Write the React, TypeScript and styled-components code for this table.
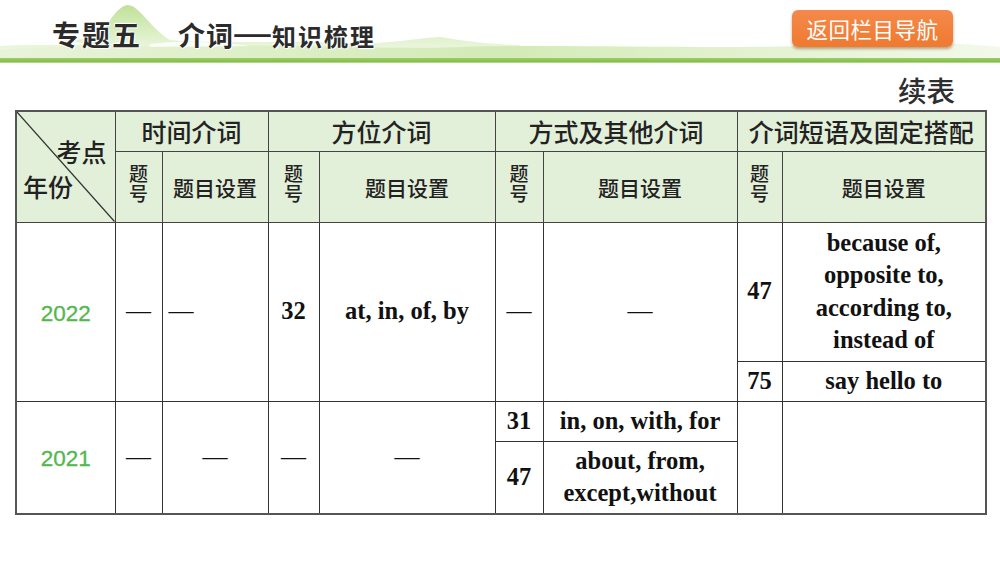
import React from 'react';
import styled, { createGlobalStyle } from 'styled-components';

const Global = createGlobalStyle`
  html, body { margin: 0; padding: 0; background: #fff; }
  body {
    width: 1000px; height: 563px; overflow: hidden;
    font-family: "Noto Sans CJK SC", "Noto Sans", sans-serif;
  }
`;

const Page = styled.div`
  width: 1000px;
  height: 563px;
  display: flex;
  flex-direction: column;
`;

const Header = styled.header`
  position: relative;
  height: 58px;
  display: flex;
  justify-content: space-between;
  align-items: stretch;
  padding: 0 47px 0 52px;
  box-sizing: border-box;
`;

const Hills = styled.svg`
  position: absolute;
  left: 0;
  top: 0;
  width: 1000px;
  height: 58px;
  z-index: 0;
`;

const Title = styled.h1`
  position: relative;
  z-index: 1;
  margin: 0;
  display: flex;
  align-items: flex-end;
  padding-bottom: 10px;
  font-weight: 700;
  color: #2b2b2b;
  text-shadow: 0 0 2px #fff, 1px 1px 1px #fff, -1px -1px 1px #fff;
`;

const TitlePart = styled.span<{ $size: number; $gap?: number; $ls?: number }>`
  font-size: ${(p) => p.$size}px;
  line-height: 1;
  margin-right: ${(p) => p.$gap ?? 0}px;
  letter-spacing: ${(p) => p.$ls ?? 2}px;
`;

const TitleDash = styled.span`
  display: inline-block;
  font-family: "Liberation Sans", Arial, sans-serif;
  font-size: 27px;
  line-height: 1;
  margin: 0 6px 0 5px;
  transform: scaleX(1.35);
  transform-origin: center;
`;

const NavButton = styled.button`
  position: relative;
  z-index: 1;
  align-self: flex-start;
  margin-top: 10px;
  width: 161px;
  height: 37px;
  border: none;
  border-radius: 6px;
  background: linear-gradient(#f5894a, #ef7a30);
  box-shadow: 0 2px 3px rgba(120, 60, 20, 0.45);
  color: #fff;
  font-family: "Noto Sans CJK SC", sans-serif;
  font-size: 21.5px;
  letter-spacing: 0.5px;
  padding: 0;
`;

const GreenBar = styled.div`
  height: 5px;
  background: linear-gradient(#9ccd66, #86bf4c 70%, #c6e3a6);
`;

const Continued = styled.div`
  height: 47px;
  display: flex;
  justify-content: flex-end;
  align-items: center;
  padding-right: 45px;
  padding-top: 6px;
  box-sizing: border-box;
  font-size: 28.5px;
  font-weight: 500;
  color: #2e2e2e;
`;

const Table = styled.table`
  margin-left: 15px;
  width: 970px;
  border-collapse: collapse;
  table-layout: fixed;
  border: 2px solid #555;
`;

const HeadRow = styled.tr<{ $h: number }>`
  height: ${(p) => p.$h}px;
  background: #e2efd9;
`;

const BodyRow = styled.tr<{ $h: number }>`
  height: ${(p) => p.$h}px;
`;

const GroupHead = styled.th`
  border: 1.5px solid #444;
  padding: 0;
  font-size: 25px;
  font-weight: 500;
  color: #222;
  text-align: center;
  vertical-align: middle;
  white-space: nowrap;
`;

const SubHead = styled.th`
  border: 1.5px solid #444;
  padding: 0;
  font-size: 21px;
  font-weight: 500;
  color: #222;
  text-align: center;
  vertical-align: middle;
`;

const Stack = styled.span`
  display: inline-block;
  writing-mode: vertical-lr;
  text-orientation: upright;
  font-size: 19px;
  line-height: 1;
  letter-spacing: 1px;
`;

const DiagCell = styled.th`
  position: relative;
  border: 1.5px solid #444;
  padding: 0;
  font-weight: 500;
  color: #222;
  font-size: 25px;
  vertical-align: top;
`;

const DiagLine = styled.svg`
  position: absolute;
  left: 0;
  top: 0;
  width: 100%;
  height: 100%;
`;

const DiagInner = styled.div`
  position: relative;
  height: 108px;
  display: flex;
  flex-direction: column;
  justify-content: space-between;
  padding: 27px 8px 21px 6px;
  box-sizing: border-box;
  line-height: 1;
`;

const DiagTop = styled.span`
  align-self: flex-end;
`;

const DiagBottom = styled.span`
  align-self: flex-start;
`;

const Cell = styled.td<{ $align?: string }>`
  border: 1.5px solid #333;
  padding: 0;
  padding-left: ${(p) => (p.$align === 'left' ? '6px' : '0')};
  text-align: ${(p) => p.$align ?? 'center'};
  vertical-align: middle;
  font-family: "Liberation Serif", "Times New Roman", serif;
  font-weight: 700;
  font-size: 24.5px;
  line-height: 32.5px;
  color: #111;
`;

const Year = styled.td`
  border: 1.5px solid #333;
  padding: 4px 0 0;
  text-align: center;
  vertical-align: middle;
  font-family: "Liberation Sans", Arial, sans-serif;
  font-size: 22.5px;
  color: #52b84c;
  -webkit-text-stroke: 0.3px #52b84c;
`;

const Dash = styled.span`
  font-family: "Liberation Serif", serif;
  font-weight: 400;
  font-size: 25px;
`;

const widths = [99, 47, 106, 51, 176, 48, 194, 45, 204];

const D = () => <Dash>—</Dash>;

const NumHead = () => (
  <SubHead>
    <Stack>题号</Stack>
  </SubHead>
);

export default function App() {
  return (
    <Page>
      <Global />
      <Header>
        <Hills viewBox="0 0 1000 58" preserveAspectRatio="none">
          <defs>
            <linearGradient id="hg" x1="0" y1="0" x2="0" y2="1">
              <stop offset="0" stopColor="#b9de8c" />
              <stop offset="1" stopColor="#f4faec" />
            </linearGradient>
            <linearGradient id="hg2" x1="0" y1="0" x2="1" y2="0">
              <stop offset="0" stopColor="#e8f4da" />
              <stop offset="0.5" stopColor="#d3ebb6" />
              <stop offset="1" stopColor="#f2f9ea" />
            </linearGradient>
          </defs>
          <path d="M0 46 C40 40 80 42 100 36 C110 20 118 6 128 5 C140 6 150 28 170 40 C220 44 300 40 360 44 C400 42 420 38 440 37 C460 40 480 44 520 45 L520 58 L0 58 Z" fill="url(#hg)" opacity="0.9" />
          <path d="M0 50 C60 44 140 48 220 46 C300 44 380 50 460 47 C560 44 700 49 800 46 C880 42 920 40 1000 47 L1000 58 L0 58 Z" fill="url(#hg2)" />
          <path d="M0 42 C30 38 60 40 90 44 C60 46 30 44 0 46 Z" fill="#ffffff" opacity="0.9" />
          <path d="M150 44 C180 40 220 42 250 46 C220 47 180 46 150 47 Z" fill="#ffffff" opacity="0.8" />
        </Hills>
        <Title>
          <TitlePart $size={28} $gap={36}>专题五</TitlePart>
          <TitlePart $size={27} $ls={1}>介词</TitlePart>
          <TitleDash>—</TitleDash>
          <TitlePart $size={24}>知识梳理</TitlePart>
        </Title>
        <NavButton>返回栏目导航</NavButton>
      </Header>
      <GreenBar />
      <Continued>续表</Continued>
      <Table>
        <colgroup>
          {widths.map((w, i) => (
            <col key={i} style={{ width: w }} />
          ))}
        </colgroup>
        <thead>
          <HeadRow $h={40}>
            <DiagCell rowSpan={2}>
              <DiagLine viewBox="0 0 100 100" preserveAspectRatio="none">
                <line x1="0" y1="0" x2="100" y2="100" stroke="#333" strokeWidth="1.2" vectorEffect="non-scaling-stroke" />
              </DiagLine>
              <DiagInner>
                <DiagTop>考点</DiagTop>
                <DiagBottom>年份</DiagBottom>
              </DiagInner>
            </DiagCell>
            <GroupHead colSpan={2}>时间介词</GroupHead>
            <GroupHead colSpan={2}>方位介词</GroupHead>
            <GroupHead colSpan={2}>方式及其他介词</GroupHead>
            <GroupHead colSpan={2}>介词短语及固定搭配</GroupHead>
          </HeadRow>
          <HeadRow $h={71}>
            <NumHead />
            <SubHead>题目设置</SubHead>
            <NumHead />
            <SubHead>题目设置</SubHead>
            <NumHead />
            <SubHead>题目设置</SubHead>
            <NumHead />
            <SubHead>题目设置</SubHead>
          </HeadRow>
        </thead>
        <tbody>
          <BodyRow $h={139}>
            <Year rowSpan={2}>2022</Year>
            <Cell rowSpan={2}><D /></Cell>
            <Cell rowSpan={2} $align="left"><D /></Cell>
            <Cell rowSpan={2}>32</Cell>
            <Cell rowSpan={2}>at, in, of, by</Cell>
            <Cell rowSpan={2}><D /></Cell>
            <Cell rowSpan={2}><D /></Cell>
            <Cell>47</Cell>
            <Cell>
              because of,<br />opposite to,<br />according to,<br />instead of
            </Cell>
          </BodyRow>
          <BodyRow $h={40}>
            <Cell>75</Cell>
            <Cell>say hello to</Cell>
          </BodyRow>
          <BodyRow $h={40}>
            <Year rowSpan={2}>2021</Year>
            <Cell rowSpan={2}><D /></Cell>
            <Cell rowSpan={2}><D /></Cell>
            <Cell rowSpan={2}><D /></Cell>
            <Cell rowSpan={2}><D /></Cell>
            <Cell>31</Cell>
            <Cell>in, on, with, for</Cell>
            <Cell rowSpan={2} />
            <Cell rowSpan={2} />
          </BodyRow>
          <BodyRow $h={73}>
            <Cell>47</Cell>
            <Cell>
              about, from,<br />except,without
            </Cell>
          </BodyRow>
        </tbody>
      </Table>
    </Page>
  );
}
